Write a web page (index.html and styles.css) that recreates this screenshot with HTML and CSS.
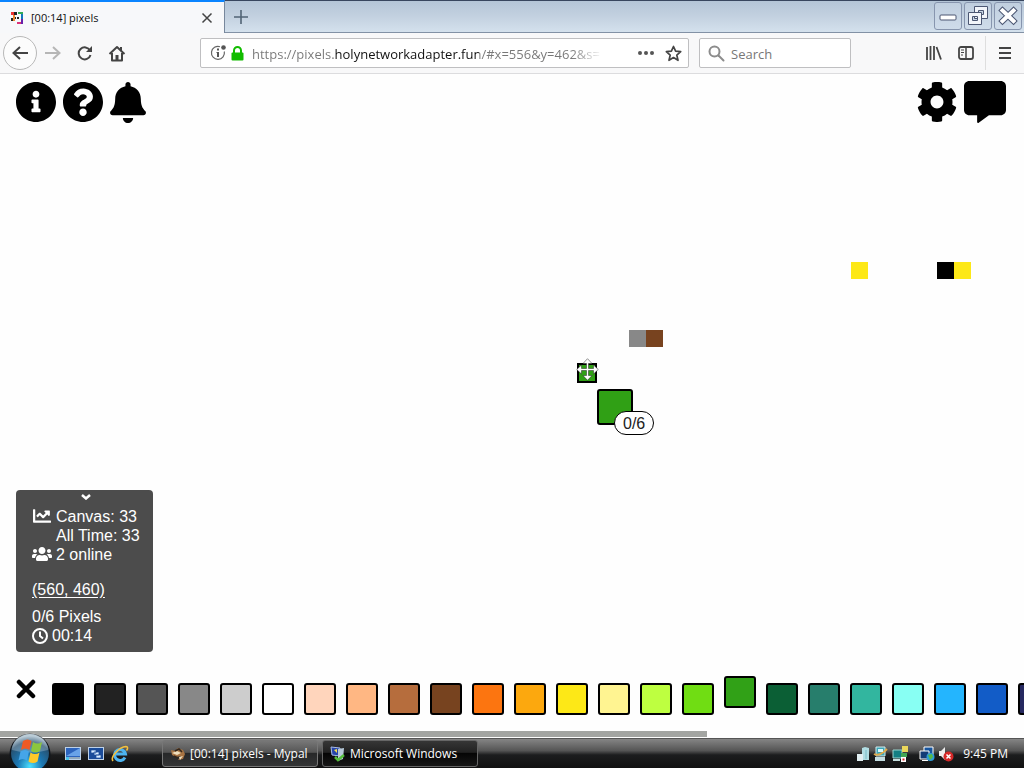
FILE: index.html
```html
<!DOCTYPE html>
<html lang="en">
<head>
<meta charset="utf-8">
<title>[00:14] pixels</title>
<link rel="stylesheet" href="styles.css">
</head>
<body>
<header class="titlebar">
  <div class="tab">
    <svg class="favicon" viewBox="0 0 12 12"><path fill="#e33" d="M0 0h3v3H0z"/><path fill="#222" d="M3 0h3v3H3zM0 6h2v3H0zM6 5h2v2H6zM3 5h2v2H3z"/><path fill="#3a5" d="M7 0h5v2H7z"/><path fill="#17b" d="M10 2h2v5h-2z"/><path fill="#62a" d="M10 7h2v5h-2z"/><path fill="#d37" d="M6 10h4v2H6z"/><path fill="#e83" d="M2 3h2v6H2z"/></svg>
    <span class="tab-title">[00:14] pixels</span>
    <button class="plain" aria-label="Close tab"><svg width="12" height="12" viewBox="0 0 12 12"><path d="M1.500 1.500l9 9m0-9l-9 9" fill="none" stroke="#444" stroke-width="1.500"/></svg></button>
  </div>
  <button class="plain new-tab" aria-label="New tab"><svg width="16" height="16" viewBox="0 0 16 16"><path d="M8 1v14M1 8h14" stroke="#526475" stroke-width="1.600"/></svg></button>
  <div class="window-controls">
    <button aria-label="Minimize"><svg viewBox="0 0 26 26"><rect x="5" y="12" width="16" height="5" rx="1" fill="#fff" stroke="#4c5773"/></svg></button>
    <button aria-label="Restore"><svg viewBox="0 0 26 26" fill="#f2f5fa" stroke="#4c5773"><path fill-rule="evenodd" d="M9.500 3.500h13v12h-13zM13.500 7.500h5v4h-5z"/><path fill-rule="evenodd" d="M3.500 9.500h13v12h-13zM7.500 13.500h5v4h-5z"/></svg></button>
    <button aria-label="Close"><svg viewBox="0 0 26 26"><path d="M7.500 7.500l11 10.500m0-10.500l-11 10.500" stroke="#4c5773" stroke-width="6" stroke-linecap="square"/><path d="M7.500 7.500l11 10.500m0-10.500l-11 10.500" stroke="#fff" stroke-width="4" stroke-linecap="square"/></svg></button>
  </div>
</header>
<nav class="toolbar">
  <button class="plain back" aria-label="Back"><svg width="18" height="16" viewBox="0 0 18 16"><path d="M17 8H2m7-6L2.500 8 9 14" fill="none" stroke="#444" stroke-width="2"/></svg></button>
  <button class="plain" aria-label="Forward" disabled><svg width="18" height="16" viewBox="0 0 18 16"><path d="M1 8h15M9 2l6.500 6L9 14" fill="none" stroke="#b6b6b6" stroke-width="2"/></svg></button>
  <button class="plain" aria-label="Reload"><svg width="16" height="16" viewBox="0 0 16 16"><path d="M13 5.500A6 6 0 1 0 13.500 10" fill="none" stroke="#444" stroke-width="2"/><path d="M15 1v6H9z" fill="#444"/></svg></button>
  <button class="plain" aria-label="Home"><svg width="18" height="17" viewBox="0 0 18 17"><path d="M1.500 9L9 2l7.500 7M4 8v7.500h10V8" fill="none" stroke="#444" stroke-width="2" stroke-linejoin="round"/><path d="M7.500 15v-5h3v5z" fill="#444"/><path d="M12 2h2v4h-2z" fill="#444"/></svg></button>
  <div class="field url">
    <svg width="16" height="16" viewBox="0 0 16 16"><path d="M10 1.700A6.500 6.500 0 1 0 14.300 6.500" fill="none" stroke="#666" stroke-width="1.200"/><circle cx="13.500" cy="2.500" r="2.300" fill="#555"/><path d="M7 3.500h2v2H7zM6.500 7H9v5H7V8h-.5z" fill="#555"/></svg>
    <svg width="13" height="15" viewBox="0 0 13 15"><rect x=".5" y="6.500" width="12" height="8" rx="1" fill="#12bc00"/><path d="M3 8V4.500a3.500 3.500 0 0 1 7 0V8" fill="none" stroke="#12bc00" stroke-width="2"/></svg>
    <input class="address" aria-label="Address" value="https://pixels.holynetworkadapter.fun/#x=556&amp;y=462&amp;s=17">
    <button class="plain" aria-label="Page actions"><svg width="16" height="16" viewBox="0 0 16 16" fill="#555"><circle cx="2" cy="8" r="2"/><circle cx="8" cy="8" r="2"/><circle cx="14" cy="8" r="2"/></svg></button>
    <button class="plain" aria-label="Bookmark"><svg width="17" height="17" viewBox="0 0 17 17"><path d="M8.500 1.500l2.100 4.700 5.100.5-3.900 3.400 1.200 5.200-4.500-2.700L4 15.300l1.200-5.200-3.900-3.400 5.100-.5z" fill="none" stroke="#444" stroke-width="1.700" stroke-linejoin="round"/></svg></button>
  </div>
  <div class="field search">
    <svg width="17" height="17" viewBox="0 0 17 17"><circle cx="6.500" cy="6.500" r="5" fill="none" stroke="#8c8c8c" stroke-width="2"/><path d="M10.500 10.500l5 5" stroke="#8c8c8c" stroke-width="2" stroke-linecap="round"/></svg>
    <input aria-label="Search" placeholder="Search">
  </div>
  <div class="nav-end">
    <button class="plain" aria-label="Library"><svg width="16" height="14" viewBox="0 0 16 14"><path d="M1 1v13M4.500 0v14M8 0v14M10.500 1l4.500 12.500" stroke="#444" stroke-width="1.800"/></svg></button>
    <button class="plain" aria-label="Sidebar"><svg width="16" height="14" viewBox="0 0 16 14"><rect x="1" y="1" width="14" height="12" rx="2" fill="none" stroke="#444" stroke-width="1.800"/><path d="M8 1v12" stroke="#444" stroke-width="1.500"/><path d="M3 4h3M3 6.500h3M3 9h2" stroke="#444"/></svg></button>
    <button class="plain menu" aria-label="Menu"><svg width="14" height="12" viewBox="0 0 14 12"><path d="M1 1h12M1 6h12M1 11h12" stroke="#444" stroke-width="1.800"/></svg></button>
  </div>
</nav>
<main class="board">
  <div class="canvas">
    <i class="px yellow p1"></i><i class="px black p2"></i><i class="px yellow p3"></i><i class="px grey p4"></i><i class="px brown p5"></i>
    <i class="reticle"></i>
    <svg class="cursor" width="23" height="23" viewBox="0 0 23 23"><path d="M11.500.7L16 5.500h-3.500v5H17.500V7l4.800 4.500-4.800 4.500v-3.500h-5v5H16l-4.500 4.800L7 17.500h3.500v-5h-5V16L.7 11.500 5.500 7v3.500h5v-5H7z" fill="#fff" stroke="#222" stroke-width=".5"/></svg>
    <div class="held"><span class="count">0/6</span></div>
  </div>
  <div class="tools">
    <button class="plain" aria-label="Info"><svg width="40" height="40" viewBox="8 8 496 496"><path d="M256 8C119.043 8 8 119.083 8 256c0 136.997 111.043 248 248 248s248-111.003 248-248C504 119.083 392.957 8 256 8zm0 110c23.196 0 42 18.804 42 42s-18.804 42-42 42-42-18.804-42-42 18.804-42 42-42zm56 254c0 6.627-5.373 12-12 12h-88c-6.627 0-12-5.373-12-12v-24c0-6.627 5.373-12 12-12h12v-64h-12c-6.627 0-12-5.373-12-12v-24c0-6.627 5.373-12 12-12h64c6.627 0 12 5.373 12 12v100h12c6.627 0 12 5.373 12 12v24z"/></svg></button>
    <button class="plain" aria-label="Help"><svg width="40" height="40" viewBox="8 8 496 496"><path d="M504 256c0 136.997-111.043 248-248 248S8 392.997 8 256C8 119.083 119.043 8 256 8s248 111.083 248 248zM262.655 90c-54.497 0-89.255 22.957-116.549 63.758-3.536 5.286-2.353 12.415 2.715 16.258l34.699 26.31c5.205 3.947 12.621 3.008 16.665-2.122 17.864-22.658 30.113-35.797 57.303-35.797 20.429 0 45.698 13.148 45.698 32.958 0 14.976-12.363 22.667-32.534 33.976C247.128 238.528 216 254.941 216 296v4c0 6.627 5.373 12 12 12h56c6.627 0 12-5.373 12-12v-1.333c0-28.462 83.186-29.647 83.186-106.667 0-58.002-60.165-102-116.531-102zM256 338c-25.365 0-46 20.635-46 46 0 25.364 20.635 46 46 46s46-20.636 46-46c0-25.365-20.635-46-46-46z"/></svg></button>
    <button class="plain" aria-label="Notifications"><svg width="36" height="41" viewBox="0 0 448 512"><path d="M224 512c35.320 0 63.970-28.650 63.970-64H160.030c0 35.350 28.650 64 63.970 64zm215.390-149.710c-19.320-20.760-55.470-51.990-55.470-154.290 0-77.700-54.480-139.900-127.940-155.160V32c0-17.670-14.320-32-31.980-32s-31.980 14.330-31.980 32v20.840C118.560 68.100 64.080 130.300 64.080 208c0 102.300-36.150 133.530-55.470 154.290-6 6.450-8.660 14.160-8.610 21.710.11 16.400 12.980 32 32.100 32h383.800c19.120 0 32-15.600 32.100-32 .05-7.550-2.610-15.270-8.610-21.710z"/></svg></button>
    <button class="plain settings" aria-label="Settings"><svg width="40" height="40" viewBox="8 8 496 496"><path d="M487.400 315.700l-42.600-24.600c4.300-23.200 4.300-47 0-70.200l42.600-24.600c4.900-2.800 7.100-8.600 5.500-14-11.100-35.600-30-67.800-54.700-94.600-3.800-4.100-10-5.100-14.800-2.300L380.800 110c-17.900-15.400-38.500-27.300-60.800-35.100V25.800c0-5.600-3.900-10.500-9.400-11.700-36.700-8.200-74.300-7.800-109.200 0-5.500 1.200-9.400 6.100-9.400 11.700V75c-22.200 7.900-42.800 19.800-60.800 35.100L88.700 85.500c-4.900-2.800-11-1.900-14.800 2.300-24.700 26.700-43.600 58.900-54.700 94.600-1.700 5.400.6 11.200 5.500 14L67.300 221c-4.300 23.200-4.300 47 0 70.200l-42.600 24.600c-4.900 2.800-7.100 8.600-5.500 14 11.100 35.600 30 67.800 54.700 94.600 3.800 4.100 10 5.100 14.800 2.300l42.600-24.600c17.900 15.400 38.500 27.300 60.800 35.100v49.200c0 5.600 3.900 10.500 9.400 11.700 36.700 8.200 74.300 7.800 109.200 0 5.500-1.200 9.400-6.100 9.400-11.700v-49.200c22.200-7.900 42.800-19.800 60.800-35.100l42.600 24.600c4.900 2.800 11 1.900 14.800-2.300 24.700-26.700 43.600-58.900 54.700-94.600 1.500-5.500-.7-11.300-5.600-14.100zM256 336c-44.100 0-80-35.900-80-80s35.900-80 80-80 80 35.900 80 80-35.900 80-80 80z"/></svg></button>
    <button class="plain" aria-label="Chat"><svg width="42" height="42" viewBox="0 0 512 512"><path d="M448 0H64C28.700 0 0 28.700 0 64v288c0 35.300 28.700 64 64 64h96v84c0 9.800 11.200 15.500 19.100 9.700L304 416h144c35.300 0 64-28.700 64-64V64c0-35.300-28.700-64-64-64z"/></svg></button>
  </div>
  <section class="info">
    <button class="plain collapse" aria-label="Collapse"><svg width="10" height="6" viewBox="0 0 10 6"><path d="M1 1l4 3.500L9 1" fill="none" stroke="#fff" stroke-width="2.500"/></svg></button>
    <div class="stats">
      <svg width="18" height="18" viewBox="0 0 512 512" fill="#fff"><path d="M496 384H64V80c0-8.840-7.160-16-16-16H16C7.160 64 0 71.160 0 80v336c0 17.670 14.330 32 32 32h464c8.840 0 16-7.160 16-16v-32c0-8.840-7.160-16-16-16zM464 96H345.940c-21.380 0-32.090 25.850-16.970 40.970l32.400 32.400L288 242.750l-73.370-73.370c-12.500-12.500-32.760-12.500-45.250 0l-68.690 68.690c-6.250 6.250-6.250 16.380 0 22.630l22.620 22.620c6.250 6.250 16.380 6.250 22.630 0L192 237.250l73.370 73.370c12.500 12.500 32.760 12.500 45.250 0l96-96 32.400 32.400c15.120 15.120 40.970 4.410 40.970-16.970V112c.01-8.840-7.150-16-15.990-16z"/></svg>
      <span>Canvas: 33<br>All Time: 33</span>
      <svg width="20" height="18" viewBox="0 0 640 512" fill="#fff"><path d="M96 224c35.300 0 64-28.700 64-64s-28.700-64-64-64-64 28.700-64 64 28.700 64 64 64zm448 0c35.300 0 64-28.700 64-64s-28.700-64-64-64-64 28.700-64 64 28.700 64 64 64zm32 32h-64c-17.600 0-33.500 7.100-45.100 18.600 40.300 22.100 68.900 62 75.100 109.400h66c17.700 0 32-14.300 32-32v-32c0-35.300-28.700-64-64-64zm-256 0c61.900 0 112-50.100 112-112S381.900 32 320 32 208 82.100 208 144s50.100 112 112 112zm76.800 32h-8.300c-20.800 10-43.900 16-68.500 16s-47.600-6-68.500-16h-8.300C179.600 288 128 339.600 128 403.200V432c0 26.500 21.500 48 48 48h288c26.500 0 48-21.500 48-48v-28.800c0-63.600-51.600-115.200-115.200-115.200zm-223.700-13.400C161.500 263.100 145.600 256 128 256H64c-35.300 0-64 28.700-64 64v32c0 17.700 14.300 32 32 32h65.900c6.300-47.400 34.900-87.300 75.200-109.400z"/></svg>
      <span>2 online</span>
    </div>
    <a class="coords" href="#x=560&amp;y=460">(560, 460)</a>
    <div>0/6 Pixels</div>
    <div class="timer"><svg width="16" height="16" viewBox="0 0 16 16" fill="none" stroke="#fff" stroke-width="2"><circle cx="8" cy="8" r="7"/><path d="M8 3.500V8l3 2.500"/></svg>00:14</div>
  </section>
  <section class="palette" aria-label="Palette">
    <div class="colors">
      <button class="plain deselect" aria-label="Deselect"><svg width="20" height="20" viewBox="0 0 20 20"><path d="M3 3l14 14m0-14L3 17" stroke="#000" stroke-width="4.500" stroke-linecap="round"/></svg></button>
      <button class="swatch c0" aria-label="Black"></button><button class="swatch c1" aria-label="Charcoal"></button><button class="swatch c2" aria-label="Dark grey"></button><button class="swatch c3" aria-label="Grey"></button><button class="swatch c4" aria-label="Light grey"></button><button class="swatch c5" aria-label="White"></button><button class="swatch c6" aria-label="Light skin"></button><button class="swatch c7" aria-label="Peach"></button><button class="swatch c8" aria-label="Light brown"></button><button class="swatch c9" aria-label="Brown"></button><button class="swatch c10" aria-label="Orange"></button><button class="swatch c11" aria-label="Amber"></button><button class="swatch c12" aria-label="Yellow"></button><button class="swatch c13" aria-label="Cream"></button><button class="swatch c14" aria-label="Lime"></button><button class="swatch c15" aria-label="Bright green"></button><button class="swatch c16 selected" aria-label="Green"></button><button class="swatch c17" aria-label="Dark green"></button><button class="swatch c18" aria-label="Pine"></button><button class="swatch c19" aria-label="Teal"></button><button class="swatch c20" aria-label="Aqua"></button><button class="swatch c21" aria-label="Azure"></button><button class="swatch c22" aria-label="Blue"></button><button class="swatch c23" aria-label="Indigo"></button>
    </div>
    <div class="scrollbar"><div class="thumb"></div></div>
  </section>
</main>
<footer class="taskbar">
  <button class="plain start" aria-label="Start"><svg width="42" height="36" viewBox="0 0 42 36"><defs><radialGradient id="orb" cx=".5" cy=".85" r=".8"><stop offset="0" stop-color="#4ce0ff"/><stop offset=".4" stop-color="#1b78b4"/><stop offset=".8" stop-color="#27506f"/><stop offset="1" stop-color="#a5bccb"/></radialGradient></defs><circle cx="21" cy="22" r="20.500" fill="#10161c"/><circle cx="21" cy="21" r="19" fill="url(#orb)"/><path d="M3 18a18 17 0 0 1 36 0q-18 5-36 0z" fill="#fff" opacity=".25"/><path d="M14 9q4.500-3 8.500 0l-2 9q-4.500-3-8.500 0z" fill="#ef5a24"/><path d="M24 10q4.500 3 9 0l-2 9q-4.500 3-9 0z" fill="#8cc63e"/><path d="M11.500 19.500q4.500-3 8.500 0l-2 9q-4.500-3-8.500 0z" fill="#45a5e8"/><path d="M21.500 20.500q4.500 3 9 0l-2 9q-4.500 3-9 0z" fill="#fdc929"/></svg></button>
  <div class="quick">
    <button class="plain" aria-label="Show desktop"><svg width="16" height="14" viewBox="0 0 16 14"><rect x=".5" y=".5" width="15" height="12" fill="#2c63bd" stroke="#bdd1e8"/><path d="M1 9L15 1v8z" fill="#69a2e8"/><path d="M1 10h14v2H1z" fill="#91a8bd"/><path d="M1 10h3v3H1z" fill="#4bc2e8"/></svg></button>
    <button class="plain" aria-label="Switch windows"><svg width="16" height="14" viewBox="0 0 16 14"><rect x=".5" y=".5" width="15" height="12" fill="#1b4c9a" stroke="#bdd1e8"/><path d="M3 3h5v3H3zM6 5h5v3H6zM8 8h5v3H8z" fill="#d8ecff" stroke="#1b4c9a" stroke-width=".7"/></svg></button>
    <button class="plain" aria-label="Internet Explorer"><svg width="18" height="18" viewBox="0 0 18 18"><path d="M14 12.500A5.500 5.500 0 1 1 14.500 9H5" fill="none" stroke="#4db4f0" stroke-width="3"/><path d="M2 16C-1 12 8 2 15 1.500c2 0 2 2 .5 4" fill="none" stroke="#f6c13c" stroke-width="1.600"/></svg></button>
  </div>
  <button class="task"><svg width="16" height="14" viewBox="0 0 16 14"><path d="M1 3l4 1 3-3 5 2 2 4-2 5-5 1 3-4-5 1-4-2z" fill="#a87443"/><path d="M2 6l5-2 4 2-4 2zM9 10l4-1-3 4z" fill="#f0dfbd"/><path d="M5 4l4-2 3 3M4 9l4 2" fill="none" stroke="#33261b" stroke-width="1.500"/></svg>[00:14] pixels - Mypal</button>
  <button class="task active"><svg width="16" height="16" viewBox="0 0 16 16"><path d="M1 1l9 1v8L2 9z" fill="#2644a8" stroke="#a9bde8"/><path d="M4 4l3-1v4z" fill="#f6dc4c"/><path d="M8 3l6-1-1 11-5 2z" fill="#b7c9d8"/><path d="M5 11l3 3 6-5" fill="none" stroke="#55bd3c" stroke-width="2.500"/></svg>Microsoft Windows</button>
  <div class="tray">
    <svg width="14" height="16" viewBox="0 0 14 16"><path d="M6 2l3-1 4 1v12H6z" fill="#b1dde3"/><path d="M1 8h6v7H1z" fill="#e2eff2"/><path d="M10 4v9" stroke="#79bcc7"/></svg>
    <svg width="16" height="16" viewBox="0 0 16 16"><path d="M3 1h9v9H3z" fill="#3da6b7" stroke="#d4edf0"/><path d="M2 11h10v4H2z" fill="#c4dee2"/><path d="M1 8q5 3 13-5" fill="none" stroke="#dfa94b" stroke-width="2"/><path d="M5 3h5v3H5z" fill="#d8f7fb"/></svg>
    <svg width="16" height="16" viewBox="0 0 16 16"><path d="M1 4h9v8H1z" fill="#147f83" stroke="#9bd5cf"/><path d="M10 0h6v6h-6z" fill="#ead65b"/><path d="M9 7h6v4H9z" fill="#41a653"/><path d="M9 11h5v5H9z" fill="#fff"/><path d="M10.500 12.500h2v2h-2z" fill="#d22"/><path d="M1 13h7v2H1z" fill="#c5dede"/></svg>
    <svg class="network" width="16" height="16" viewBox="0 0 16 16"><path d="M5 1h9v8H5z" fill="#17559e" stroke="#fff"/><path d="M1 5h9v8H1z" fill="#123b77" stroke="#fff"/><path d="M3 14h6v1H3z" fill="#fff"/><circle cx="11.500" cy="11" r="4" fill="#2d9bd8"/><path d="M9 9l4-1 1 3-3 3z" fill="#58b947"/></svg>
    <svg width="16" height="16" viewBox="0 0 16 16"><path d="M1 5h2l4-4v13l-4-4H1z" fill="#eee"/><circle cx="10.500" cy="10.500" r="5" fill="#d52828"/><path d="M8.500 8.500l4 4m0-4l-4 4" stroke="#fff" stroke-width="1.500"/></svg>
    <time>9:45 PM</time>
  </div>
</footer>
</body>
</html>
```
FILE: styles.css
```css
* { box-sizing: border-box; }
body {
  margin: 0;
  min-height: 100vh;
  display: flex;
  flex-direction: column;
  overflow: hidden;
  background: #fff;
  font-family: "Open Sans", "Noto Sans", sans-serif;
  font-size: 12px;
}
svg { display: block; flex: none; }
button { font: inherit; cursor: pointer; }
.plain { padding: 0; border: 0; background: none; flex: none; }

.titlebar {
  display: flex;
  align-items: stretch;
  height: 33px;
  border-top: 1px solid #38465f;
  border-bottom: 1px solid #8291a5;
  background: linear-gradient(#b4c5d7, #c3d1e0 50%, #d4e1ed);
}
.tab {
  display: flex;
  align-items: center;
  gap: 8px;
  width: 225px;
  margin: -1px 0;
  padding: 0 11px;
  border-top: 2px solid #0a84ff;
  border-right: 1px solid #77879c;
  background: #f7f8fa;
}
.favicon { width: 12px; height: 12px; }
.tab-title { flex: 1; color: #111; font-size: 11px; }
.new-tab { padding: 0 8px; }
.window-controls { display: flex; gap: 2px; margin-left: auto; padding: 1px 2px 2px 0; }
.window-controls button {
  width: 28px;
  padding: 0;
  border: 1px solid #8795ae;
  border-radius: 3px;
  background: linear-gradient(#c0cfdf, #cfdcea);
}

.toolbar {
  display: flex;
  align-items: center;
  height: 41px;
  padding: 0 12px 0 3px;
  gap: 15px;
  background: #f8f8f9;
  border-bottom: 1px solid #dcdcde;
}
.back {
  display: grid;
  place-items: center;
  width: 34px;
  height: 34px;
  margin-right: -8px;
  border: 1px solid #b8b8b8;
  border-radius: 50%;
  background: #fcfcfc;
}
.field {
  display: flex;
  align-items: center;
  height: 30px;
  border: 1px solid #bfbfc1;
  border-radius: 2px;
  background: #fff;
}
.field input {
  min-width: 0;
  flex: 1;
  padding: 2px 0 0;
  border: 0;
  outline: 0;
  background: none;
  font: 13px "Open Sans", "Noto Sans", sans-serif;
}
.url { flex: 1; margin-left: 59px; padding: 0 6px 0 9px; gap: 5px; }
.url .plain { margin-left: 6px; }
.field .address {
  margin-left: 3px;
  color: transparent;
  background: linear-gradient(90deg, #777 82px, #111 82px, #111 227px, #777 227px, #777 320px, transparent 350px);
  -webkit-background-clip: text;
  background-clip: text;
}
.search { width: 152px; margin-left: -5px; padding: 0 8px; gap: 6px; }
.search input::placeholder { color: #777; opacity: 1; }
.nav-end { display: flex; align-items: center; gap: 16px; margin-left: 60px; }
.menu { height: 34px; margin-left: -5px; padding-left: 12px; border-left: 1px solid #dedede; }

.board { position: relative; flex: 1; display: flex; flex-direction: column; overflow: hidden; background: #fefefe; }
.canvas { position: absolute; inset: 0; }
.px { position: absolute; width: 17px; height: 17px; }
.yellow { background: #fde817; }
.black { background: #000; }
.grey { background: #888; }
.brown { background: #78431f; }
.p1 { left: 851px; top: 188px; }
.p2 { left: 937px; top: 188px; }
.p3 { left: 954px; top: 188px; }
.p4 { left: 629px; top: 256px; }
.p5 { left: 646px; top: 256px; }
.reticle { position: absolute; left: 577px; top: 289px; width: 20px; height: 20px; border: 2px solid #000; background: #30a015; }
.cursor { position: absolute; left: 576px; top: 284px; }
.held { position: absolute; left: 597px; top: 315px; width: 36px; height: 36px; border: 2px solid #000; border-radius: 3px; background: #30a015; }
.count {
  position: absolute;
  left: 15px;
  top: 20px;
  padding: 2px 8px 0;
  border: 1px solid #000;
  border-radius: 12px;
  background: #fff;
  color: #222;
  font: 16px/20px "Liberation Sans", sans-serif;
}
.tools { position: relative; display: flex; align-items: center; gap: 7px; padding: 7px 18px 0 16px; }
.settings { margin-left: auto; }

.info {
  position: relative;
  align-self: flex-start;
  margin: auto 0 0 16px;
  padding: 4px 13px 7px 16px;
  border-radius: 4px;
  background: #4c4c4c;
  color: #fff;
  font: 16px/19px "Liberation Sans", sans-serif;
}
.collapse { display: block; height: 13px; margin: 0 auto; }
.collapse svg { margin-bottom: 7px; }
.stats { display: grid; grid-template-columns: 20px auto; column-gap: 4px; justify-items: center; }
.stats span { justify-self: start; }
.coords { display: inline-block; margin: 16px 0 8px; color: #fff; text-underline-offset: 2px; }
.timer { display: flex; align-items: center; gap: 4px; }

.palette { position: relative; margin-top: 18px; padding-top: 6px; }
.colors { display: flex; align-items: flex-end; gap: 10px; padding: 0 0 16px 16px; overflow: hidden; }
.deselect { width: 20px; margin: 0 6px 16px 0; }
.swatch { flex: none; width: 32px; height: 32px; padding: 0; border: 2px solid #000; border-radius: 3px; }
.selected { margin-bottom: 7px; }
.c0 { background: #000; }
.c1 { background: #222; }
.c2 { background: #555; }
.c3 { background: #888; }
.c4 { background: #cdcdcd; }
.c5 { background: #fff; }
.c6 { background: #ffd5bc; }
.c7 { background: #ffb783; }
.c8 { background: #b66d3d; }
.c9 { background: #77431f; }
.c10 { background: #fc7510; }
.c11 { background: #fca80e; }
.c12 { background: #fde817; }
.c13 { background: #fff491; }
.c14 { background: #beff40; }
.c15 { background: #70dd13; }
.c16 { background: #31a117; }
.c17 { background: #0b5f35; }
.c18 { background: #277e6c; }
.c19 { background: #32b69f; }
.c20 { background: #88fff3; }
.c21 { background: #24b5fe; }
.c22 { background: #125cc7; }
.c23 { background: #262960; }
.scrollbar { height: 7px; background: #fefefe; }
.thumb { width: 69%; height: 6px; background: #a3a5a2; }

.taskbar {
  position: relative;
  display: flex;
  align-items: center;
  height: 30px;
  padding: 0 16px 0 9px;
  border-top: 1px solid #555;
  background: linear-gradient(#858585, #555 40%, #1c1d1e 55%, #111);
  color: #fff;
}
.start { align-self: flex-end; }
.quick { display: flex; align-items: center; gap: 7px; margin: 0 33px 0 14px; }
.task {
  display: flex;
  align-items: center;
  gap: 4px;
  width: 156px;
  height: 27px;
  margin-right: 4px;
  padding: 0 7px;
  border: 1px solid #777;
  border-radius: 3px;
  background: linear-gradient(#777, #555 45%, #272829 50%, #343536);
  color: #fff;
  white-space: nowrap;
}
.active { border-color: #666; background: linear-gradient(#363636, #222 45%, #050505 50%, #171717); }
.tray { display: flex; align-items: center; gap: 3px; margin-left: auto; }
.network { margin-left: 8px; }
.tray time { margin-left: 6px; }
```
